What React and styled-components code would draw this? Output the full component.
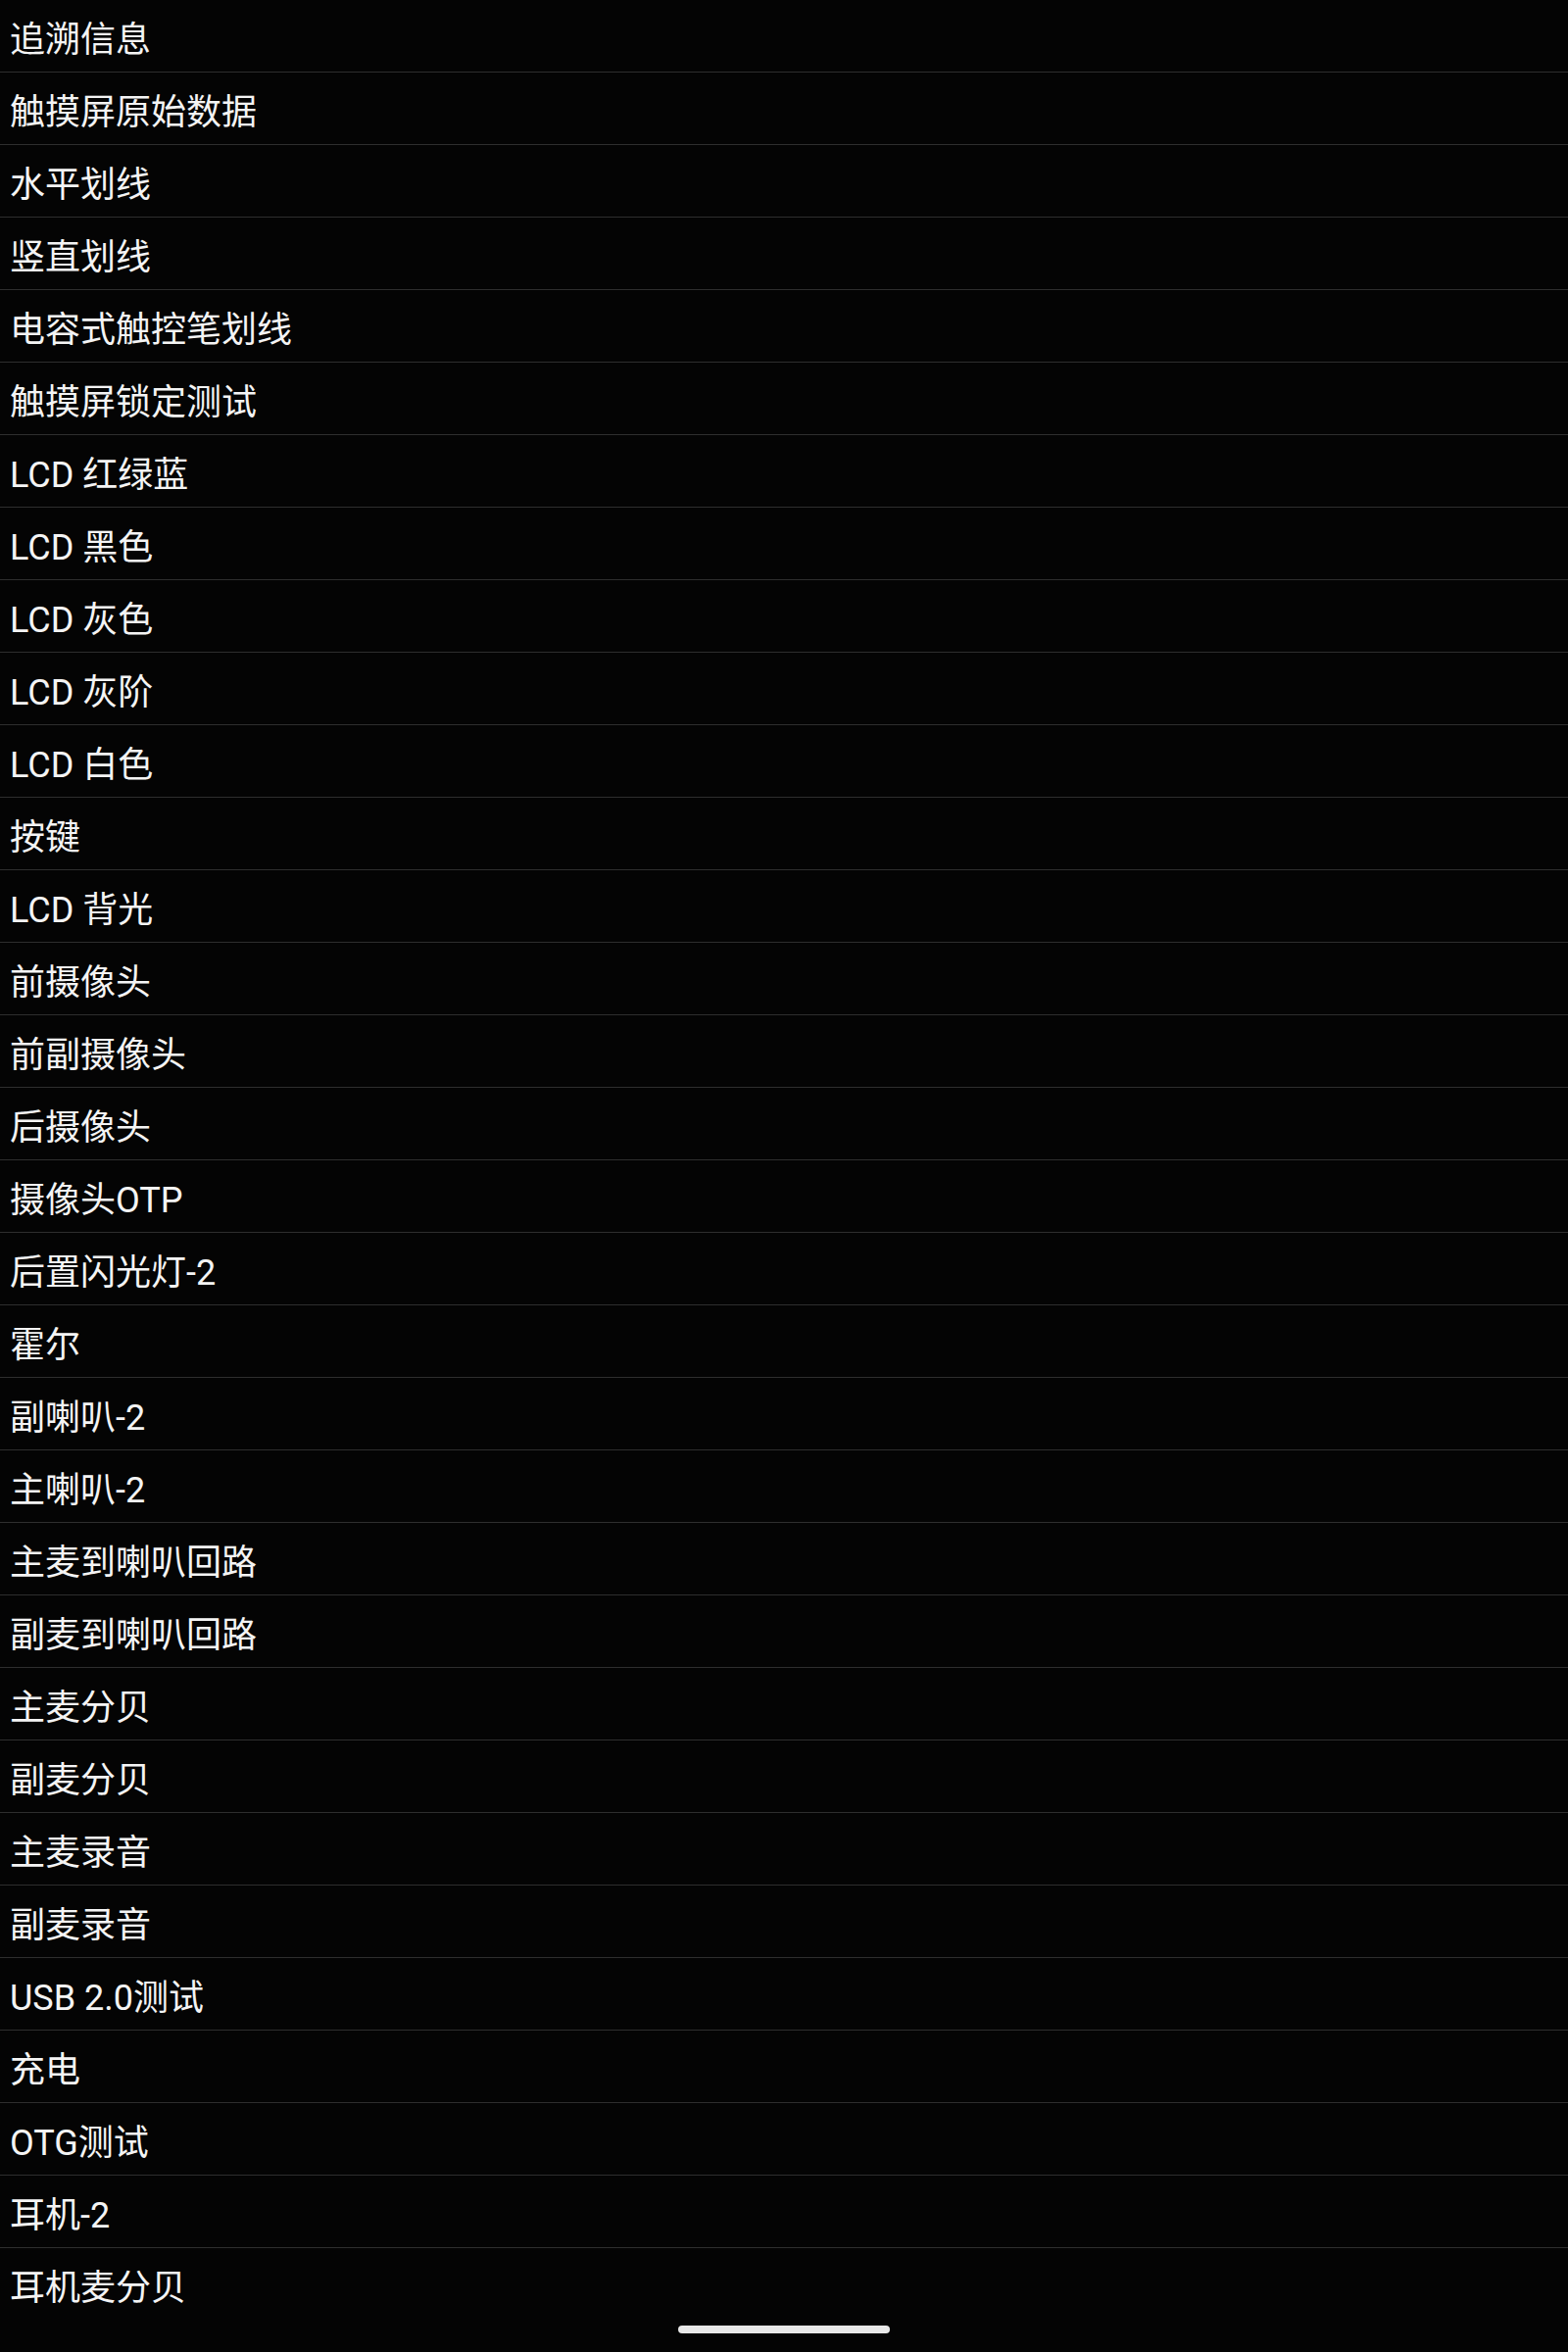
import styled, { createGlobalStyle } from 'styled-components';

const tests = [
  '追溯信息',
  '触摸屏原始数据',
  '水平划线',
  '竖直划线',
  '电容式触控笔划线',
  '触摸屏锁定测试',
  'LCD 红绿蓝',
  'LCD 黑色',
  'LCD 灰色',
  'LCD 灰阶',
  'LCD 白色',
  '按键',
  'LCD 背光',
  '前摄像头',
  '前副摄像头',
  '后摄像头',
  '摄像头OTP',
  '后置闪光灯-2',
  '霍尔',
  '副喇叭-2',
  '主喇叭-2',
  '主麦到喇叭回路',
  '副麦到喇叭回路',
  '主麦分贝',
  '副麦分贝',
  '主麦录音',
  '副麦录音',
  'USB 2.0测试',
  '充电',
  'OTG测试',
  '耳机-2',
  '耳机麦分贝',
];

const GlobalStyle = createGlobalStyle`
  html, body {
    margin: 0;
    padding: 0;
    background: #040404;
  }
  * {
    box-sizing: border-box;
  }
`;

const Screen = styled.div`
  width: 1600px;
  height: 2400px;
  display: flex;
  flex-direction: column;
  background: #040404;
  font-family: Roboto, "Noto Sans CJK SC", sans-serif;
  color: #f4f4f4;
  overflow: hidden;
`;

const List = styled.ul`
  list-style: none;
  margin: 0;
  padding: 0;
`;

const Item = styled.li`
  height: 74px;
  display: flex;
  align-items: center;
  padding: 0 0 0 10px;
  font-size: 36px;
  border-bottom: 1px solid ${p => (p.last ? 'transparent' : '#2e2e2e')};
`;

// gesture bar at the bottom of the screen
const NavBar = styled.div`
  flex: 1;
  display: flex;
  justify-content: center;
  padding-top: 5px;
`;

const HomeHandle = styled.div`
  width: 216px;
  height: 8px;
  border-radius: 4px;
  background: #e8e8e8;
`;

function App() {
  return (
    <Screen>
      <GlobalStyle />
      <List>
        {tests.map((name, i) => (
          <Item key={name} last={i === tests.length - 1}>
            {name}
          </Item>
        ))}
      </List>
      <NavBar>
        <HomeHandle />
      </NavBar>
    </Screen>
  );
}

export default App;
